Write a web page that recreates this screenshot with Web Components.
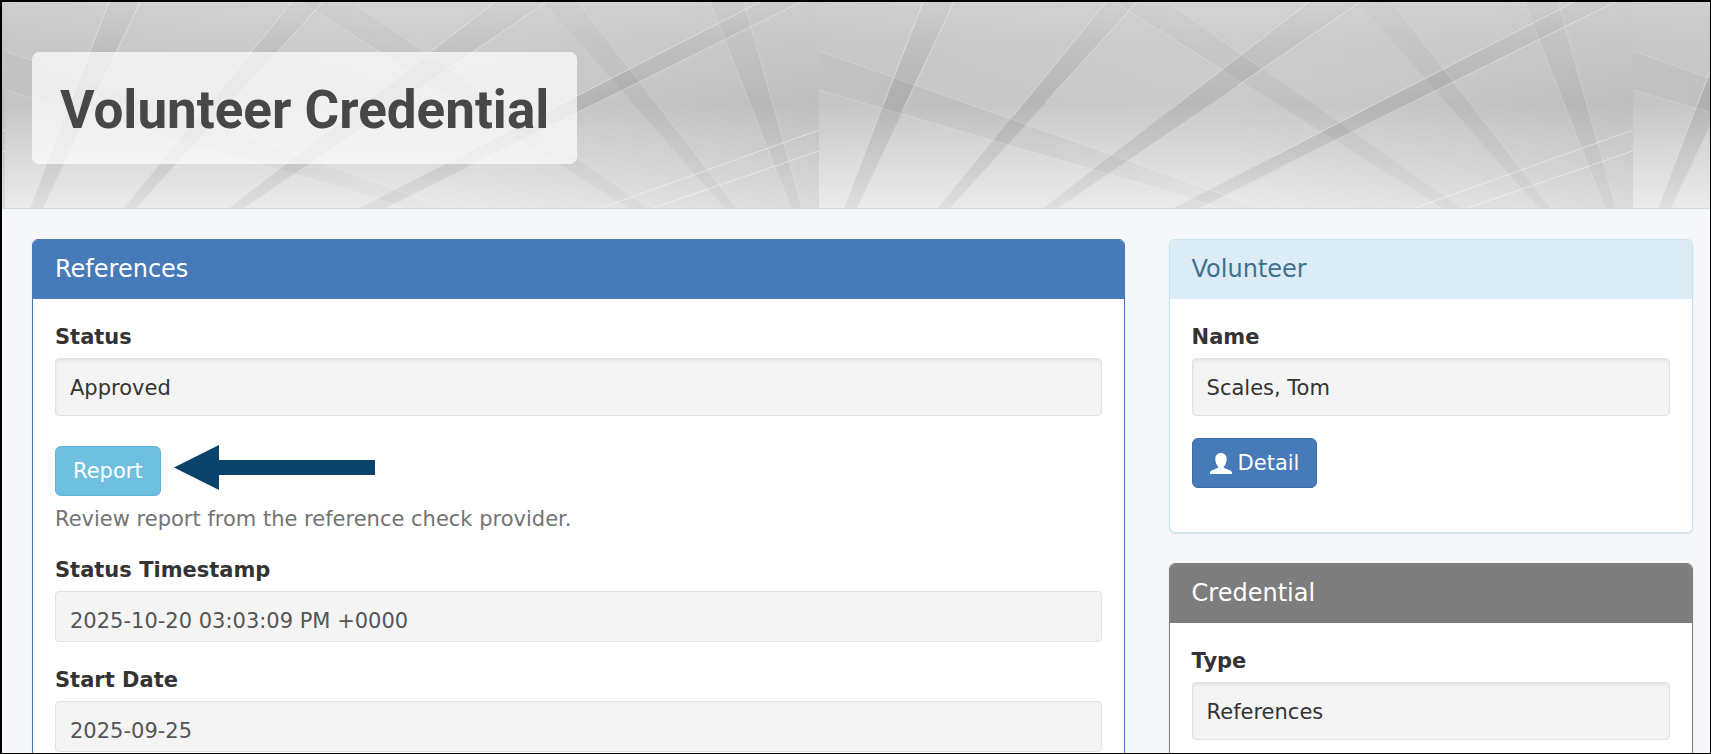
<!DOCTYPE html>
<html lang="en">
<head>
<meta charset="utf-8">
<title>Volunteer Credential</title>
<style>
html, body { margin: 0; }
body { font: 21px/30px "DejaVu Sans", Verdana, sans-serif; color: #333; }
</style>
</head>
<body>
<credential-page></credential-page>

<template id="t-page">
<style>
:host {
  display: block; box-sizing: border-box; height: 100vh; overflow: hidden;
  border: solid #000; border-width: 2px 1px 1px 2px; background: #f5f7fb;
}
main {
  display: grid; grid-template-columns: 25fr 12fr; gap: 44px; align-items: start;
  padding: 30px 17px 30px 30px;
}
aside { display: grid; gap: 30px; }
.row { display: flex; align-items: flex-start; gap: 13px; margin-top: 30px; }
.row svg { flex: none; margin-top: -1px; }
p { margin: 8px 0 20px; color: #737373; line-height: 30px; }
.detail { margin-top: 22px; padding-bottom: 22px; }
read-field + read-field { margin-top: 22px; }
</style>
<page-banner>Volunteer Credential</page-banner>
<main>
  <info-panel tone="primary">
    <span slot="title">References</span>
    <read-field label="Status" value="Approved" well></read-field>
    <div class="row">
      <action-button tone="info">Report</action-button>
      <svg width="201" height="45" viewBox="0 0 201 45" aria-hidden="true"><path fill="#0b4269" d="M0 22.500 45 0V15H201V30H45V45Z"/></svg>
    </div>
    <p>Review report from the reference check provider.</p>
    <read-field label="Status Timestamp" value="2025-10-20 03:03:09 PM +0000"></read-field>
    <read-field label="Start Date" value="2025-09-25"></read-field>
  </info-panel>
  <aside>
    <info-panel tone="info">
      <span slot="title">Volunteer</span>
      <read-field label="Name" value="Scales, Tom" well></read-field>
      <div class="detail">
        <action-button tone="primary"><svg slot="icon" width="22" height="21" viewBox="0 0 22 21" aria-hidden="true"><path fill="#fff" d="M11 0C7.500 0 5.300 2.500 5.300 6c0 3 1.200 5.600 2.700 7.400.4.600.3 1.200-.3 1.500L1.800 17.600C.5 18.200 0 18.800 0 19.700V21h22v-1.300c0-.9-.5-1.500-1.800-2.100l-5.900-2.700c-.6-.3-.7-.9-.3-1.500C15.500 11.600 16.700 9 16.700 6c0-3.500-2.200-6-5.700-6Z"/></svg>Detail</action-button>
      </div>
    </info-panel>
    <info-panel tone="neutral">
      <span slot="title">Credential</span>
      <read-field label="Type" value="References" well></read-field>
    </info-panel>
  </aside>
</main>
</template>

<template id="t-banner">
<style>
:host { display: grid; border-bottom: 1px solid #cfdbe2; }
:host > * { grid-area: 1 / 1; }
.art { width: 100%; height: 100%; min-height: 0; contain: size; }
header { position: relative; padding: 50px 30px 44px; }
h1 {
  width: fit-content; margin: 0; padding: 28px 28px 24px; border-radius: 7px;
  background: rgba(255,255,255,.7); color: #474747;
  font: 700 53px/60px Roboto, sans-serif;
}
</style>
<svg class="art" aria-hidden="true">
  <defs>
    <linearGradient id="base" x2="0" y2="1">
      <stop offset="0" stop-color="#e0e0e0"/><stop offset=".2" stop-color="#d3d3d3"/>
      <stop offset=".5" stop-color="#cacaca"/><stop offset=".62" stop-color="#d2d2d2"/>
      <stop offset="1" stop-color="#eaeaea"/>
    </linearGradient>
    <linearGradient id="left" x2=".3" y2=".6">
      <stop offset="0" stop-color="#000" stop-opacity=".08"/><stop offset="1" stop-color="#000" stop-opacity="0"/>
    </linearGradient>
    <linearGradient id="right">
      <stop offset=".5" stop-color="#000" stop-opacity="0"/><stop offset="1" stop-color="#000" stop-opacity=".06"/>
    </linearGradient>
    <linearGradient id="shade" gradientUnits="userSpaceOnUse" x1="0" y1="0" x2="0" y2="206">
      <stop offset="0" stop-opacity=".01"/><stop offset=".45" stop-opacity=".085"/>
      <stop offset=".7" stop-opacity=".08"/><stop offset="1" stop-opacity=".05"/>
    </linearGradient>
    <linearGradient id="faint" gradientUnits="userSpaceOnUse" x1="0" y1="0" x2="0" y2="206">
      <stop offset="0" stop-opacity=".015"/><stop offset=".5" stop-opacity=".045"/><stop offset="1" stop-opacity=".03"/>
    </linearGradient>
    <linearGradient id="sweep" gradientUnits="userSpaceOnUse" x1="0" y1="0" x2="441" y2="0">
      <stop offset="0" stop-opacity=".02"/><stop offset=".4" stop-opacity=".045"/><stop offset="1" stop-opacity=".01"/>
    </linearGradient>
    <pattern id="tile" x="3" width="814" height="206" patternUnits="userSpaceOnUse">
      <rect width="814" height="206" fill="url(#base)"/>
      <rect width="814" height="206" fill="url(#left)"/>
      <rect width="814" height="206" fill="url(#right)"/>
      <g fill="url(#shade)">
        <path d="M104 0H135L38 206H25Z"/>
        <path d="M287 0H318L131 206H119Z"/>
        <path d="M490 0H541L239 206H224Z"/>
        <path d="M755 0H796L381 206H354Z"/>
      </g>
      <path fill="url(#sweep)" d="M0 49 341 170 441 206H400L341 187 0 88Z"/>
      <g fill="url(#faint)">
        <path d="M296 0H348L642 206H624Z"/>
        <path d="M539 0H573L732 206H720Z"/>
        <path d="M705 0H739L797 206H786Z"/>
      </g>
      <g fill="none" stroke="#fff">
        <path stroke-opacity=".38" d="M104 0 64 103M135 0 83 110M287 0 195 113M318 0 226 101M490 0 351 108M541 0 418 84M755 0 455 154M796 0 462 165"/>
        <path stroke-opacity=".15" d="M64 103 25 206M351 108 224 206M455 154 354 206M462 165 381 206"/>
        <path stroke-opacity=".18" d="M0 49 341 170 441 206M0 88 341 187 400 206M296 0 403 68M348 0 442 66M573 0 732 206M705 0 786 206M739 0 797 206"/>
        <path stroke-opacity=".45" d="M596 206 814 128M648 206 814 149"/>
      </g>
    </pattern>
  </defs>
  <rect width="100%" height="100%" fill="url(#tile)"/>
</svg>
<header><h1><slot></slot></h1></header>
</template>

<template id="t-panel">
<style>
:host {
  --edge: #467ab9; --bar: #467ab9; --ink: #fff;
  display: block; border: 1px solid var(--edge); border-radius: 6px;
  background: #fff; box-shadow: 0 1px 2px rgba(0,0,0,.1); overflow: hidden;
}
:host([tone="info"]) { --edge: #c3e7ef; --bar: #dcecf6; --ink: #3f718f; }
:host([tone="neutral"]) { --edge: #7d7d7d; --bar: #7d7d7d; }
h2 {
  margin: 0; padding: 14px 22px 15px; background: var(--bar); color: var(--ink);
  font-size: 24px; font-weight: 400; line-height: 30px;
}
section { padding: 22px; }
</style>
<h2><slot name="title"></slot></h2>
<section><slot></slot></section>
</template>

<template id="t-field">
<style>
:host { display: block; }
label { display: block; margin-bottom: 5px; font-weight: 700; line-height: 32px; }
input {
  display: block; box-sizing: border-box; width: 100%; height: 51px; margin: 0;
  padding: 8px 14px 0; border: 1px solid #e2e2e2; border-radius: 4px;
  background: #f4f4f4; color: #555; font: inherit; outline: none;
}
:host([well]) input {
  height: 58px; padding: 2px 14px 0; color: #333; box-shadow: inset 0 2px 3px rgba(0,0,0,.06);
}
</style>
<label for="value"></label>
<input id="value" type="text" readonly>
</template>

<template id="t-button">
<style>
:host { display: inline-block; vertical-align: top; }
button {
  display: flex; align-items: center; gap: 6px; height: 50px; margin: 0; padding: 0 17px;
  border: 1px solid #3d6ca6; border-radius: 6px; background: #467ab9; color: #fff;
  font: inherit; cursor: pointer;
}
:host([tone="info"]) button { border-color: #5db6d9; background: #6fbfdf; }
</style>
<button type="button"><slot name="icon"></slot><span><slot></slot></span></button>
</template>

<script>
class TemplateElement extends HTMLElement {
  constructor() {
    super();
    const source = document.getElementById(this.constructor.template);
    this.attachShadow({ mode: "open" }).append(source.content.cloneNode(true));
  }
}
class PageBanner extends TemplateElement { static template = "t-banner"; }
class InfoPanel extends TemplateElement { static template = "t-panel"; }
class ActionButton extends TemplateElement { static template = "t-button"; }
class ReadField extends TemplateElement {
  static template = "t-field";
  connectedCallback() {
    this.shadowRoot.querySelector("label").textContent = this.getAttribute("label");
    this.shadowRoot.querySelector("input").value = this.getAttribute("value");
  }
}
class CredentialPage extends TemplateElement { static template = "t-page"; }
customElements.define("page-banner", PageBanner);
customElements.define("info-panel", InfoPanel);
customElements.define("action-button", ActionButton);
customElements.define("read-field", ReadField);
customElements.define("credential-page", CredentialPage);
</script>
</body>
</html>
